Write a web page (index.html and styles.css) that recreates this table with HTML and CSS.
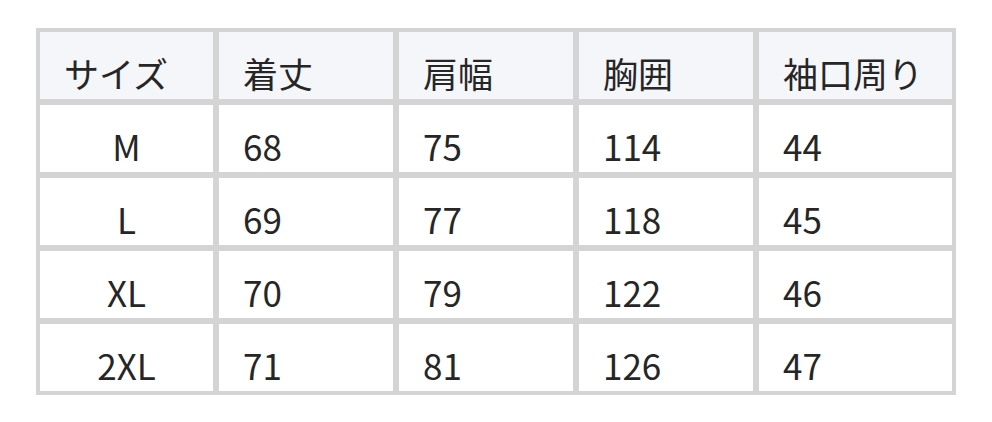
FILE: index.html
```html
<!DOCTYPE html>
<html lang="ja">
<head>
<meta charset="utf-8">
<title>サイズ表</title>
<link rel="stylesheet" href="styles.css">
</head>
<body>
<div class="size-table" role="table">
  <div class="cell head" role="columnheader">サイズ</div>
  <div class="cell head" role="columnheader">着丈</div>
  <div class="cell head" role="columnheader">肩幅</div>
  <div class="cell head" role="columnheader">胸囲</div>
  <div class="cell head" role="columnheader">袖口周り</div>

  <div class="cell size" role="cell">M</div>
  <div class="cell" role="cell">68</div>
  <div class="cell" role="cell">75</div>
  <div class="cell" role="cell">114</div>
  <div class="cell" role="cell">44</div>

  <div class="cell size" role="cell">L</div>
  <div class="cell" role="cell">69</div>
  <div class="cell" role="cell">77</div>
  <div class="cell" role="cell">118</div>
  <div class="cell" role="cell">45</div>

  <div class="cell size" role="cell">XL</div>
  <div class="cell" role="cell">70</div>
  <div class="cell" role="cell">79</div>
  <div class="cell" role="cell">122</div>
  <div class="cell" role="cell">46</div>

  <div class="cell size" role="cell">2XL</div>
  <div class="cell" role="cell">71</div>
  <div class="cell" role="cell">81</div>
  <div class="cell" role="cell">126</div>
  <div class="cell" role="cell">47</div>
</div>
</body>
</html>
```
FILE: styles.css
```css
html, body {
  margin: 0;
  padding: 0;
  background: #ffffff;
}

body {
  font-family: "Noto Sans CJK JP", "Noto Sans", sans-serif;
  color: #262626;
}

.size-table {
  margin: 28px 36px 0 36px;
  width: 920px;
  box-sizing: border-box;
  display: grid;
  grid-template-columns: 173px 174px 174px 174px 193px;
  grid-auto-rows: 67px;
  gap: 6px;
  padding: 4px;
  background: #d4d4d4;
}

.cell {
  background: #ffffff;
  font-size: 35px;
  line-height: 52px;
  padding: 15px 0 0 24px;
  box-sizing: border-box;
  white-space: nowrap;
}

.cell.head {
  background: #f5f6fa;
}

.cell.size {
  padding-left: 0;
  text-align: center;
}
```
